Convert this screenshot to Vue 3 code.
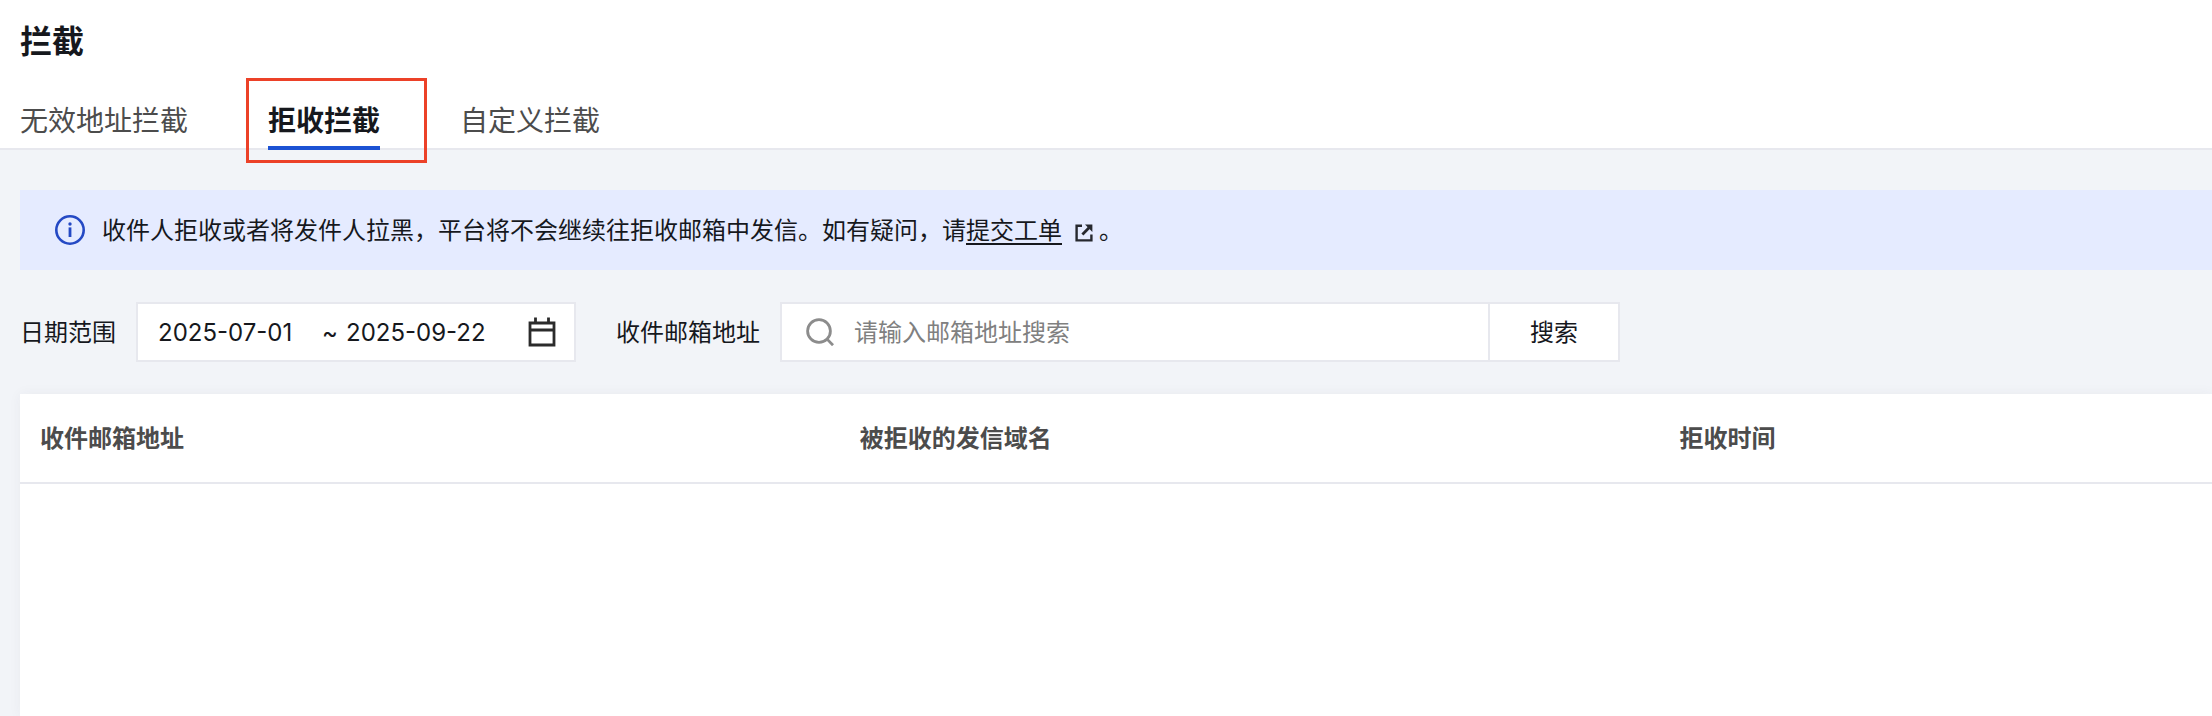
<script setup>
import { ref } from 'vue'

const tabs = ['无效地址拦截', '拒收拦截', '自定义拦截']
const active = ref(1)
const columns = ['收件邮箱地址', '被拒收的发信域名', '拒收时间']
const startDate = ref('2025-07-01')
const endDate = ref('2025-09-22')
const keyword = ref('')
</script>

<template>
  <div class="page">
    <header class="header">
      <h1 class="title">拦截</h1>
      <nav class="tabs" role="tablist">
        <button
          v-for="(tab, i) in tabs"
          :key="tab"
          type="button"
          role="tab"
          class="tab"
          :class="{ active: i === active }"
          :aria-selected="i === active"
          @click="active = i"
        >
          {{ tab }}
          <span v-if="i === 1" class="marker" aria-hidden="true"></span>
        </button>
      </nav>
    </header>

    <main class="content">
      <div class="notice">
        <svg class="info-icon" viewBox="0 0 30 30" fill="none" stroke="#2449c4">
          <circle cx="15" cy="15" r="13.7" stroke-width="2.6" />
          <path d="M15 12.4V22" stroke-width="2.8" />
          <circle cx="15" cy="9" r="1.7" fill="#2449c4" stroke="none" />
        </svg>
        <p class="notice-text">
          <span>收件人拒收或者将发件人拉黑，平台将不会继续往拒收邮箱中发信。如有疑问，请</span><a class="link" href="#">提交工单</a>
          <svg class="external-icon" viewBox="0 0 18 18" fill="none" stroke="#26282e" stroke-width="2.4">
            <path d="M7 1.7H1.6V16.4H16.4V10.6" />
            <path d="M7.4 10.4L14 3.8" stroke-width="2.8" />
            <path d="M10 0.6H17.4V8Z" fill="#26282e" stroke="none" />
          </svg>
          <span>。</span>
        </p>
      </div>

      <form class="filters" @submit.prevent>
        <label class="label" for="start-date">日期范围</label>
        <div class="date-range">
          <input id="start-date" v-model="startDate" class="date-input" type="text" />
          <span class="tilde">~</span>
          <input v-model="endDate" class="date-input end" type="text" aria-label="结束日期" />
          <svg class="calendar-icon" viewBox="0 0 28 30" fill="none" stroke="#2b2b2b" stroke-width="2.8">
            <path d="M2 6H26V28H2Z" />
            <path d="M2 13H26M7.5 0.5V6M20.5 0.5V6" />
          </svg>
        </div>

        <label class="label email-label" for="email">收件邮箱地址</label>
        <div class="search">
          <div class="search-field">
            <svg class="search-icon" viewBox="0 0 28 28" fill="none" stroke="#8c8c8c" stroke-width="2.8">
              <circle cx="13" cy="13" r="11.4" />
              <path d="M20.6 20.6L27 27.2" />
            </svg>
            <input id="email" v-model="keyword" class="search-input" type="text" placeholder="请输入邮箱地址搜索" />
          </div>
          <button class="search-button" type="submit">搜索</button>
        </div>
      </form>

      <section class="panel">
        <table class="table">
          <thead>
            <tr>
              <th v-for="column in columns" :key="column" scope="col">{{ column }}</th>
            </tr>
          </thead>
        </table>
      </section>
    </main>
  </div>
</template>

<style>
body {
  margin: 0;
  background: #f2f4f8;
}
</style>

<style scoped>
.page {
  display: flex;
  flex-direction: column;
  min-height: 100vh;
  background: #f2f4f8;
  color: #16181d;
  font-family: Inter, "Noto Sans CJK SC", sans-serif;
  font-size: 24px;
  line-height: 36px;
}

.page *,
.page {
  box-sizing: border-box;
}

button,
input {
  margin: 0;
  padding: 0;
  border: 0;
  border-radius: 0;
  background: none;
  color: inherit;
  font: inherit;
  outline: 0;
}

button {
  cursor: pointer;
}

.header {
  padding: 18px 20px 0;
  background: #fff;
  border-bottom: 2px solid #e7e8ee;
}

.title {
  margin: 0;
  font-size: 32px;
  line-height: 48px;
  font-weight: 700;
}

.tabs {
  display: flex;
  gap: 80px;
  margin: 26px 0 -2px;
}

.tab {
  position: relative;
  padding: 9px 0 5px;
  border-bottom: 4px solid transparent;
  color: #4c4c4c;
  font-size: 28px;
  line-height: 40px;
  white-space: nowrap;
}

.tab.active {
  border-bottom-color: #1c52d4;
  color: #16181d;
  font-weight: 700;
}

.marker {
  position: absolute;
  inset: -14px -47px -17px -22px;
  border: 3px solid #ec4128;
  pointer-events: none;
}

.content {
  display: flex;
  flex: 1;
  flex-direction: column;
  padding: 40px 0 0 20px;
}

.notice {
  display: flex;
  align-items: center;
  gap: 17px;
  padding: 21px 35px;
  background: #e5ebff;
}

.info-icon {
  flex: none;
  width: 30px;
  height: 30px;
}

.notice-text {
  display: flex;
  align-items: center;
  margin: 0;
  padding-top: 2px;
}

.link {
  color: inherit;
  text-decoration: underline;
  text-decoration-thickness: 2px;
  text-underline-offset: 4px;
}

.external-icon {
  width: 18px;
  height: 18px;
  margin: 4px 6px 0 13px;
}

.filters {
  display: flex;
  align-items: center;
  padding: 32px 0;
}

.label {
  flex: none;
  padding-top: 2px;
}

.date-range {
  display: flex;
  align-items: center;
  width: 440px;
  height: 60px;
  margin-left: 20px;
  padding: 0 18px 0 20px;
  border: 2px solid #e7e8ee;
  background: #fff;
}

.date-input {
  width: 164px;
  padding-top: 2px;
}

.date-input.end {
  width: 150px;
  margin-left: 8px;
}

.tilde {
  width: 16px;
  padding-top: 2px;
}

.calendar-icon {
  width: 28px;
  height: 30px;
  margin-left: auto;
}

.email-label {
  margin-left: 40px;
}

.search {
  display: flex;
  width: 840px;
  height: 60px;
  margin-left: 20px;
  border: 2px solid #e7e8ee;
  background: #fff;
}

.search-field {
  display: flex;
  flex: 1;
  align-items: center;
  gap: 20px;
  padding-left: 24px;
  border-right: 2px solid #e7e8ee;
}

.search-icon {
  flex: none;
  width: 28px;
  height: 28px;
}

.search-input {
  flex: 1;
  min-width: 0;
  padding-top: 2px;
}

.search-input::placeholder {
  color: #808080;
  opacity: 1;
}

.search-button {
  width: 128px;
  padding-top: 2px;
}

.panel {
  flex: 1;
  background: #fff;
  box-shadow: 0 0 12px rgba(54, 58, 80, 0.05);
}

.table {
  width: 100%;
  border-collapse: separate;
  border-spacing: 0;
  table-layout: fixed;
}

.table th {
  width: 37.4%;
  padding: 27px 20px 25px;
  border-bottom: 2px solid #e7e8ee;
  color: #4c4c4c;
  font-weight: 700;
  text-align: left;
}

.table th:last-child {
  width: auto;
}
</style>
